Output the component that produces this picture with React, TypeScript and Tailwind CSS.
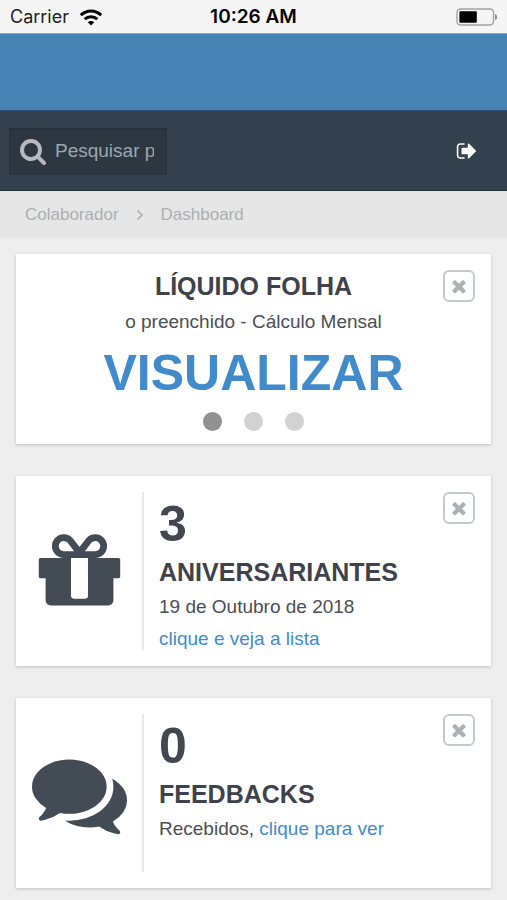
import type { ReactNode } from "react"

function Icon({ path, className }: { path: string; className: string }) {
  return (
    <svg viewBox="0 0 1792 1792" fill="currentColor" className={className} aria-hidden="true">
      <path d={path} />
    </svg>
  )
}

const searchPath =
  "M1216 832q0-185-131.5-316.5T768 384 451.5 515.5 320 832t131.5 316.5T768 1280t316.5-131.5T1216 832zm512 832q0 52-38 90t-90 38q-54 0-90-38l-343-342q-179 124-399 124-143 0-273.5-55.5t-225-150-150-225T64 832t55.5-273.5 150-225 225-150T768 128t273.5 55.5 225 150 150 225T1472 832q0 220-124 399l343 343q37 37 37 90z"
const signOutPath =
  "M704 1440q0 4 1 20t.5 26.5-3 23.5-10 19.5-20.5 6.5h-320q-119 0-203.5-84.5t-84.5-203.5v-704q0-119 84.5-203.5t203.5-84.5h320q13 0 22.5 9.5t9.5 22.5q0 4 1 20t.5 26.5-3 23.5-10 19.5-20.5 6.5h-320q-66 0-113 47t-47 113v704q0 66 47 113t113 47h312l11.5 1 11.5 3 8 5.5 7 9 2 13.5zm928-544q0 26-19 45l-544 544q-19 19-45 19t-45-19-19-45v-288h-448q-26 0-45-19t-19-45v-384q0-26 19-45t45-19h448v-288q0-26 19-45t45-19 45 19l544 544q19 19 19 45z"
const timesPath =
  "M1490 1322q0 40-28 68l-136 136q-28 28-68 28t-68-28l-294-294-294 294q-28 28-68 28t-68-28l-136-136q-28-28-28-68t28-68l294-294-294-294q-28-28-28-68t28-68l136-136q28-28 68-28t68 28l294 294 294-294q28-28 68-28t68 28l136 136q28 28 28 68t-28 68l-294 294 294 294q28 28 28 68z"
const giftPath =
  "M1056 1356v-716h-320v716q0 25 18 38.5t46 13.5h192q28 0 46-13.5t18-38.5zm-456-844h195l-126-161q-26-31-69-31-40 0-68 28t-28 68 28 68 68 28zm688-96q0-40-28-68t-68-28q-43 0-69 31l-125 161h194q40 0 68-28t28-68zm376 256v320q0 14-9 23t-23 9h-96v416q0 40-28 68t-68 28h-1088q-40 0-68-28t-28-68v-416h-96q-14 0-23-9t-9-23v-320q0-14 9-23t23-9h440q-93 0-158.5-65.5t-65.5-158.5 65.5-158.5 158.5-65.5q107 0 168 77l128 165 128-165q61-77 168-77 93 0 158.5 65.5t65.5 158.5-65.5 158.5-158.5 65.5h440q14 0 23 9t9 23z"
const commentsPath =
  "M1408 768q0 139-94 257t-256.5 186.5-353.5 68.5q-86 0-176-16-124 88-278 128-36 9-86 16h-3q-11 0-20.5-8t-11.5-21q-1-3-1-6.5t.5-6.5 2-6l2.5-5 3.5-5.5 4-5 4.5-5 4-4.5q5-6 23-25t26-29.5 22.5-29 25-38.5 20.5-44q-124-72-195-177t-71-224q0-139 94-257t256.5-186.5 353.5-68.5 353.5 68.5 256.5 186.5 94 257zm384 256q0 120-71 224.5t-195 176.5q10 24 20.5 44t25 38.5 22.5 29 26 29.5 23 25q1 1 4 4.5t4.5 5 4 5 3.5 5.5l2.5 5 2 6 .5 6.5-1 6.5q-3 14-13 22t-22 7q-50-7-86-16-154-40-278-128-90 16-176 16-271 0-472-132 58 4 88 4 161 0 309-45t264-129q125-92 192-212t67-254q0-77-23-152 129 71 204 178t75 230z"

function CloseButton() {
  return (
    <button
      aria-label="Fechar"
      className="absolute top-4 right-4 flex size-8 items-center justify-center rounded-md border-2 border-[#c6c9cb] text-[#adb1b4]"
    >
      <Icon path={timesPath} className="size-5" />
    </button>
  )
}

function StatCard({ icon, value, title, children }: { icon: string; value: string; title: string; children: ReactNode }) {
  return (
    <section className="relative flex bg-white pt-4 pr-4 pb-[11px] pl-4 shadow-[0_1px_3px_rgba(0,0,0,0.2)]">
      <div className="flex h-[158px] shrink-0 items-center border-r-2 border-[#e9e9e9] pr-[15px] text-[#434b55]">
        <Icon path={icon} className="size-[95px]" />
      </div>
      <div className="pl-[15px]">
        <p className="text-[50px] leading-[64px] font-bold text-[#434750]">{value}</p>
        <h2 className="mb-[3px] text-[25px] leading-8 font-bold text-[#3f424a]">{title}</h2>
        <div className="min-h-16 text-[19px] leading-8">{children}</div>
      </div>
      <CloseButton />
    </section>
  )
}

export default function App() {
  return (
    <div className="flex min-h-screen flex-col bg-[#eeeeee] font-['Liberation_Sans',Arial,sans-serif] text-[#4b4e55]">
      {/* Phone status bar */}
      <div className="grid h-[33px] grid-cols-3 items-center bg-[#f5f5f5] px-[10px] pt-px font-['Inter',sans-serif] text-black">
        <div className="flex items-center gap-[10px]">
          <span className="text-[18px] leading-6 text-[#222222]">Carrier</span>
          <svg viewBox="0 0 24 17" className="h-[17px] w-6" fill="none" stroke="currentColor" strokeWidth="3" aria-hidden="true">
            <path d="M1.8 6.2C7.7.6 16.3.6 22.2 6.2" />
            <path d="M5.7 10.2c3.6-3.3 9-3.3 12.6 0" />
            <path d="M12 16.5l-3.2-3.3c1.8-1.6 4.6-1.6 6.4 0z" fill="currentColor" stroke="none" />
          </svg>
        </div>
        <span className="text-center text-[19px] leading-6 font-semibold whitespace-nowrap">10:26 AM</span>
        <svg viewBox="0 0 42 18" className="h-[18px] w-[42px] justify-self-end" aria-hidden="true">
          <rect x="2" y="1" width="36.5" height="16" rx="3.5" fill="none" stroke="#a3a3a3" strokeWidth="1.4" />
          <rect x="4.4" y="3.2" width="17.4" height="11.6" rx="0.8" fill="#000000" />
          <path d="M40 6c3 1 3 5 0 6z" fill="#8f8f8f" />
        </svg>
      </div>

      {/* Header */}
      <header>
        <div className="h-[77px] border-t border-[#72b2dc] bg-[#4682b4]"></div>
        <div className="flex h-[81px] items-center justify-between border-t border-b border-t-[#2f5068] border-b-[#28303a] bg-[#34424f] pt-px pr-[29px] pl-[9px]">
          <label className="flex h-[47px] w-[158px] items-center bg-[#2c3742] pr-[13px] pl-[10px] text-[#b8bac0] shadow-[inset_0_1px_3px_rgba(0,0,0,0.2)]">
            <Icon path={searchPath} className="mr-2 size-7 shrink-0" />
            <input
              type="text"
              aria-label="Pesquisar"
              placeholder="Pesquisar p"
              className="w-full min-w-0 bg-transparent text-[19px] leading-8 outline-none placeholder:text-[#a1a6ae]"
            />
          </label>
          <button aria-label="Sair" className="text-white">
            <Icon path={signOutPath} className="size-[22px]" />
          </button>
        </div>
      </header>

      {/* Breadcrumb */}
      <nav className="flex h-[47px] items-center gap-[17px] bg-[#e6e6e6] px-[25px] pt-px text-[17px] leading-8 text-[#adafb1]">
        <a href="#colaborador">Colaborador</a>
        <svg viewBox="0 0 8 12" className="h-3 w-2" fill="none" stroke="currentColor" strokeWidth="1.6" aria-hidden="true">
          <path d="M1.5 1.5L6 6l-4.5 4.5" />
        </svg>
        <a href="#dashboard">Dashboard</a>
      </nav>

      <main className="flex flex-col gap-8 px-4 pt-4 pb-3">
        {/* Card 1 */}
        <section className="relative flex flex-col items-center bg-white pt-4 pb-[13px] text-center shadow-[0_1px_3px_rgba(0,0,0,0.2)]">
          <h2 className="mb-1 text-[25px] leading-8 font-bold text-[#3f424a]">LÍQUIDO FOLHA</h2>
          <p className="mb-[3px] text-[19px] leading-8">o preenchido - Cálculo Mensal</p>
          <a href="#visualizar" className="text-[50px] leading-[64px] font-bold text-[#428bca]">
            VISUALIZAR
          </a>
          <div className="mt-[7px] flex gap-[22px]">
            <button aria-label="1" className="size-[19px] rounded-full bg-[#919191]"></button>
            <button aria-label="2" className="size-[19px] rounded-full bg-[#d2d2d2]"></button>
            <button aria-label="3" className="size-[19px] rounded-full bg-[#d2d2d2]"></button>
          </div>
          <CloseButton />
        </section>

        {/* Card 2 */}
        <StatCard icon={giftPath} value="3" title="ANIVERSARIANTES">
          <p>19 de Outubro de 2018</p>
          <a href="#aniversariantes" className="text-[#428bca]">clique e veja a lista</a>
        </StatCard>

        {/* Card 3 */}
        <StatCard icon={commentsPath} value="0" title="FEEDBACKS">
          <p>
            Recebidos, <a href="#feedbacks" className="text-[#428bca]">clique para ver</a>
          </p>
        </StatCard>
      </main>
    </div>
  )
}
